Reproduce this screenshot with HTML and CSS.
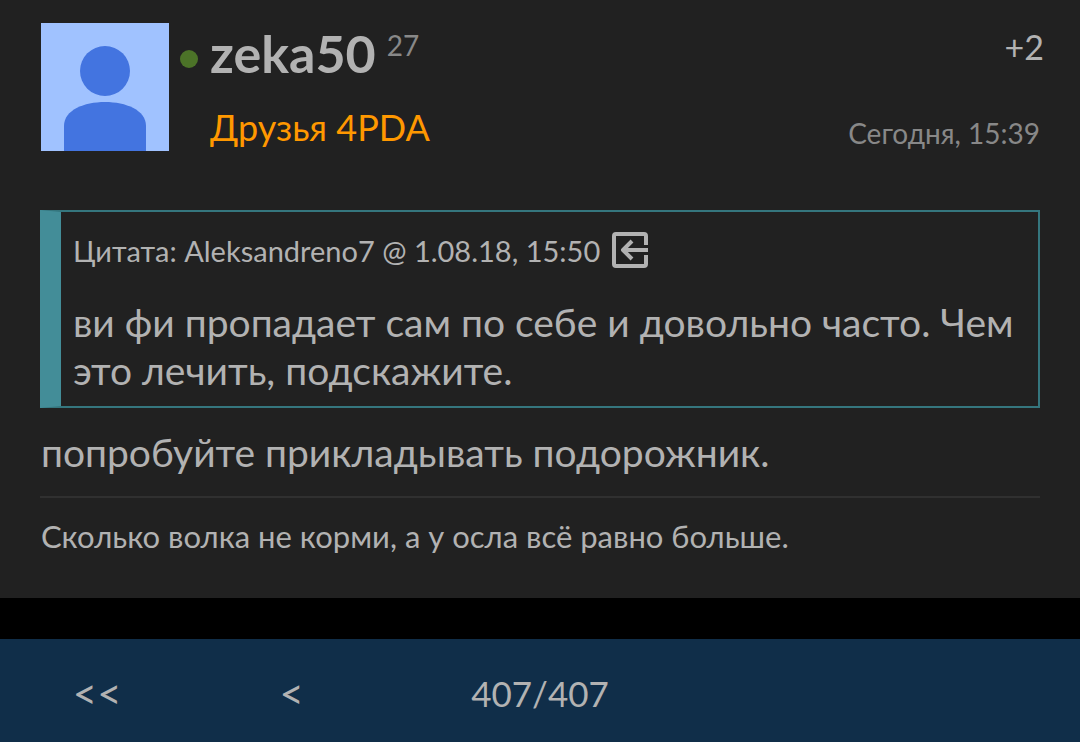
FILE: index.html
```html
<!DOCTYPE html>
<html lang="ru">
<head>
<meta charset="utf-8">
<meta name="viewport" content="width=device-width, initial-scale=1">
<title>Сообщение</title>
<link rel="stylesheet" href="styles.css">
</head>
<body>
<main class="post">
  <header class="post-header">
    <svg class="avatar" viewBox="0 0 128 128" role="img" aria-label="Аватар">
      <rect width="128" height="128" fill="#a0c2ff"/>
      <circle cx="64" cy="48" r="25" fill="#4374e0"/>
      <path d="M23 128V103C23 87 43 79 64 79S105 87 105 103V128Z" fill="#4374e0"/>
    </svg>
    <span class="online"></span>
    <div class="author">
      <div class="name-row"><a class="name" href="#">zeka50</a><span class="reputation">27</span></div>
      <div class="group">Друзья 4PDA</div>
    </div>
    <div class="meta">
      <span class="score">+2</span>
      <time class="date">Сегодня, 15:39</time>
    </div>
  </header>
  <blockquote class="quote">
    <div class="quote-title">
      <span>Цитата: Aleksandreno7 @ 1.08.18, 15:50</span>
      <a class="quote-link" href="#" aria-label="Перейти к сообщению">
        <svg class="quote-icon" viewBox="0 0 36 36" fill="none" stroke="#b2b2b2" stroke-width="4">
          <path d="M34 13V4Q34 2 32 2H4Q2 2 2 4V32Q2 34 4 34H32Q34 34 34 32V23"/>
          <path d="M36 18H12M20 9L11 18L20 27" stroke-linejoin="round"/>
        </svg>
      </a>
    </div>
    <p class="quote-text">ви фи пропадает сам по себе и довольно часто. Чем это лечить, подскажите.</p>
  </blockquote>
  <p class="message">попробуйте прикладывать подорожник.</p>
  <footer class="signature">Сколько волка не корми, а у осла всё равно больше.</footer>
</main>
<nav class="pager">
  <button class="page-button arrow" type="button">&lt;&lt;</button>
  <button class="page-button arrow" type="button">&lt;</button>
  <button class="page-button" type="button">407/407</button>
</nav>
</body>
</html>
```
FILE: styles.css
```css
* { box-sizing: border-box; }
body {
  margin: 0;
  min-height: 100vh;
  display: flex;
  flex-direction: column;
  background: #000;
  color: #b2b2b2;
  font-family: Lato, "Open Sans", sans-serif;
}
a { color: inherit; text-decoration: none; }
p { margin: 0; }
.post { padding: 23px 40px 42px; background: #212121; }
.post-header { display: flex; height: 128px; }
.avatar { width: 128px; height: 128px; margin-left: 1px; }
.online { width: 18px; height: 18px; margin: 27px 12px 0 11px; border-radius: 50%; background: #4c7328; }
.author { flex: 1; }
.name-row { display: flex; height: 80px; line-height: 60px; gap: 11px; }
.name { font-size: 52px; font-weight: 700; }
.reputation { font-size: 28px; line-height: 44px; color: #888; }
.group { font-size: 36px; line-height: 48px; color: #ff9800; }
.meta { display: flex; flex-direction: column; align-items: flex-end; }
.score { flex: none; height: 88px; font-size: 34px; line-height: 48px; margin-right: -4px; }
.date { font-size: 28px; line-height: 44px; color: #888; }
.quote {
  margin: 59px 0 0;
  padding: 14px 12px 10px 12px;
  border: 2px solid #35767e;
  border-left: 21px solid #438d98;
}
.quote-title { display: flex; align-items: center; gap: 12px; height: 48px; font-size: 29px; }
.quote-link { display: flex; }
.quote-icon { width: 36px; height: 36px; }
.quote-text { margin-top: 24px; font-size: 39px; line-height: 48px; padding-bottom: 2px; }
.message { padding: 20px 1px; font-size: 39px; line-height: 48px; }
.signature { padding: 18px 1px 0; border-top: 2px solid #303030; font-size: 31px; line-height: 40px; }
.pager {
  display: grid;
  grid-template-columns: 18fr 18fr 28fr 18fr 18fr;
  flex: 1;
  margin-top: 41px;
  background: #102e49;
}
.page-button { border: 0; padding: 4px 0 0; background: none; color: #b2b2b2; font: inherit; font-size: 35px; }
.arrow { font-size: 42px; }
```
